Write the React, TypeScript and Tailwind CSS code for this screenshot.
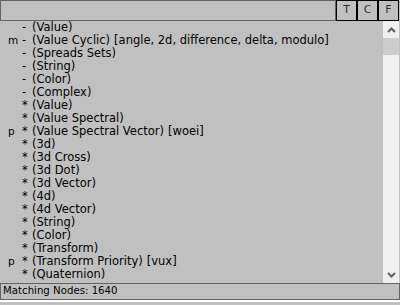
const rows: Array<{ flag?: string; mark: string; label: string; tags?: string }> = [
  { mark: "-", label: "(Value)" },
  { flag: "m", mark: "-", label: "(Value Cyclic)", tags: "[angle, 2d, difference, delta, modulo]" },
  { mark: "-", label: "(Spreads Sets)" },
  { mark: "-", label: "(String)" },
  { mark: "-", label: "(Color)" },
  { mark: "-", label: "(Complex)" },
  { mark: "*", label: "(Value)" },
  { mark: "*", label: "(Value Spectral)" },
  { flag: "p", mark: "*", label: "(Value Spectral Vector)", tags: "[woei]" },
  { mark: "*", label: "(3d)" },
  { mark: "*", label: "(3d Cross)" },
  { mark: "*", label: "(3d Dot)" },
  { mark: "*", label: "(3d Vector)" },
  { mark: "*", label: "(4d)" },
  { mark: "*", label: "(4d Vector)" },
  { mark: "*", label: "(String)" },
  { mark: "*", label: "(Color)" },
  { mark: "*", label: "(Transform)" },
  { flag: "p", mark: "*", label: "(Transform Priority)", tags: "[vux]" },
  { mark: "*", label: "(Quaternion)" },
];

function Chevron({ down }: { down?: boolean }) {
  return (
    <svg width="9" height="6" viewBox="0 0 9 6" className={down ? "rotate-180" : ""}>
      <path d="M1 5 L4.5 1.5 L8 5" fill="none" stroke="#606060" strokeWidth="2" />
    </svg>
  );
}

export default function App() {
  return (
    <div className="flex h-[305px] w-[400px] flex-col overflow-hidden bg-[#c0c0c0] font-['DejaVu_Sans',sans-serif] text-[11.5px] text-black">
      <div className="flex h-[21px]">
        <div className="h-[21px] w-[336px] border border-[#646464]" />
        {["T", "C", "F"].map((b) => (
          <div key={b} className="flex h-[21px] w-[21px] items-center justify-center border border-black text-[11px] text-[#333]">
            {b}
          </div>
        ))}
      </div>

      <div className="flex h-[262px]">
        <ul className="flex-1 overflow-hidden">
          {rows.map((r, i) => (
            <li key={i} className="flex h-[13px] items-center whitespace-nowrap leading-[13px]">
              <span className="w-[22px] pl-[8px] text-[10.5px]">{r.flag}</span>
              <span className="w-[10px]">{r.mark}</span>
              <span>{r.label}</span>
              {r.tags && <span className="ml-[4px]">{r.tags}</span>}
            </li>
          ))}
        </ul>
        <div className="flex w-[16px] flex-col bg-[#f0f0f0]">
          <div className="flex h-[17px] items-center justify-center">
            <Chevron />
          </div>
          <div className="h-[17px] bg-[#cdcdcd]" />
          <div className="flex-1" />
          <div className="flex h-[17px] items-center justify-center">
            <Chevron down />
          </div>
        </div>
        <div className="w-[1px]" />
      </div>

      <div className="flex h-[17px] items-center border border-[#646464] px-[2px] text-[10.2px] leading-none">Matching Nodes: 1640</div>
      <div className="h-[2px] bg-white" />
    </div>
  );
}
